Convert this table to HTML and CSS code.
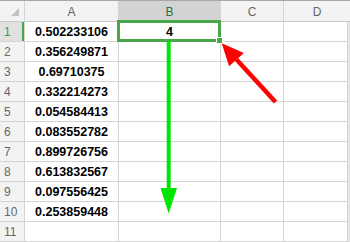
FILE: index.html
```html
<!DOCTYPE html>
<html>

<head>
	<meta charset="utf-8">
	<meta name="viewport" content="width=device-width">
	<link rel="stylesheet" href="styles.css">
</head>

<body>
	<div class="sheet">
		<div class="grid">
			<div class="corner"></div>
			<div class="col-head">A</div>
			<div class="col-head active">B</div>
			<div class="col-head">C</div>
			<div class="col-head last">D</div>

			<div class="row-head active">1</div>
			<div class="cell num">0.502233106</div>
			<div class="cell num">4</div>
			<div class="cell"></div>
			<div class="cell"></div>
			<div class="scroll"></div>

			<div class="row-head">2</div>
			<div class="cell num">0.356249871</div>
			<div class="cell"></div>
			<div class="cell"></div>
			<div class="cell"></div>
			<div class="scroll"></div>

			<div class="row-head">3</div>
			<div class="cell num">0.69710375</div>
			<div class="cell"></div>
			<div class="cell"></div>
			<div class="cell"></div>
			<div class="scroll"></div>

			<div class="row-head">4</div>
			<div class="cell num">0.332214273</div>
			<div class="cell"></div>
			<div class="cell"></div>
			<div class="cell"></div>
			<div class="scroll"></div>

			<div class="row-head">5</div>
			<div class="cell num">0.054584413</div>
			<div class="cell"></div>
			<div class="cell"></div>
			<div class="cell"></div>
			<div class="scroll"></div>

			<div class="row-head">6</div>
			<div class="cell num">0.083552782</div>
			<div class="cell"></div>
			<div class="cell"></div>
			<div class="cell"></div>
			<div class="scroll"></div>

			<div class="row-head">7</div>
			<div class="cell num">0.899726756</div>
			<div class="cell"></div>
			<div class="cell"></div>
			<div class="cell"></div>
			<div class="scroll"></div>

			<div class="row-head">8</div>
			<div class="cell num">0.613832567</div>
			<div class="cell"></div>
			<div class="cell"></div>
			<div class="cell"></div>
			<div class="scroll"></div>

			<div class="row-head">9</div>
			<div class="cell num">0.097556425</div>
			<div class="cell"></div>
			<div class="cell"></div>
			<div class="cell"></div>
			<div class="scroll"></div>

			<div class="row-head">10</div>
			<div class="cell num">0.253859448</div>
			<div class="cell"></div>
			<div class="cell"></div>
			<div class="cell"></div>
			<div class="scroll"></div>

			<div class="row-head">11</div>
			<div class="cell"></div>
			<div class="cell"></div>
			<div class="cell"></div>
			<div class="cell"></div>
			<div class="scroll"></div>

			<!-- next row, only its top edge shows -->
			<div class="row-head"></div>
			<div class="cell"></div>
			<div class="cell"></div>
			<div class="cell"></div>
			<div class="cell"></div>
			<div class="scroll"></div>
		</div>

		<!-- selected cell B1 with its fill handle -->
		<div class="selection">
			<span class="handle"></span>
		</div>

		<!-- callout arrows drawn over the grid -->
		<svg class="arrows" width="350" height="242" viewBox="0 0 350 242">
			<line x1="168.7" y1="41" x2="168.7" y2="190" stroke="#00e600" stroke-width="4" />
			<polygon points="160.5,188 177,188 168.7,213.5" fill="#00e600" />
			<line x1="236.5" y1="59.6" x2="275.5" y2="102" stroke="#ff0000" stroke-width="4.5" />
			<polygon points="221.7,43.3 243.9,52.9 229.1,66.3" fill="#ff0000" />
		</svg>
	</div>
</body>

</html>
```

FILE: styles.css
```css
html,
body {
	margin: 0;
	padding: 0;
	background: #ffffff;
	overflow: hidden;
}

.sheet {
	position: relative;
	width: 350px;
	height: 242px;
	overflow: hidden;
	font-family: "Liberation Sans", Arial, sans-serif;
}

.grid {
	display: grid;
	grid-template-columns: 25px 94px 102px 63px 64px 2px;
	grid-template-rows: 21px repeat(12, 20px);
	border-top: 1px solid #a8a8a8;
	box-sizing: border-box;
	height: 262px;
}

.corner {
	position: relative;
	background: #f3f3f3;
	border-right: 1px solid #d4d4d4;
	border-bottom: 1px solid #c8c8c8;
}

.corner::after {
	content: "";
	position: absolute;
	left: 11px;
	top: 7px;
	width: 8px;
	height: 8px;
	background: #c3c3c3;
	clip-path: polygon(100% 0, 100% 100%, 0 100%);
}

.col-head {
	background: #f3f3f3;
	border-right: 1px solid #d4d4d4;
	border-bottom: 1px solid #c8c8c8;
	color: #666666;
	font-size: 12px;
	text-align: center;
	line-height: 22px;
}

.col-head.active {
	background: #d3d3d3;
	color: #217346;
}

.col-head.last {
	grid-column: span 2;
	border-right: none;
}

.row-head {
	background: #f3f3f3;
	border-right: 1px solid #d4d4d4;
	border-bottom: 1px solid #d4d4d4;
	color: #666666;
	font-size: 12px;
	line-height: 20px;
	padding-left: 4px;
}

.row-head.active {
	background: #e1e1e1;
	color: #3e9a3e;
	box-shadow: inset -2px 0 0 #4aa64a;
}

.cell {
	border-right: 1px solid #d4d4d4;
	border-bottom: 1px solid #d4d4d4;
}

.num {
	color: #000000;
	font-weight: bold;
	font-size: 12.5px;
	text-align: center;
	line-height: 21px;
}

.scroll {
	background: #e6e6e6;
}

.selection {
	position: absolute;
	left: 117px;
	top: 20px;
	width: 104px;
	height: 22px;
	box-sizing: border-box;
	border: 3px solid #4aa64a;
}

.handle {
	position: absolute;
	right: -4px;
	bottom: -4px;
	width: 5px;
	height: 5px;
	background: #4aa64a;
	outline: 1px solid #ffffff;
}

.arrows {
	position: absolute;
	top: 0;
	left: 0;
	pointer-events: none;
}
```
